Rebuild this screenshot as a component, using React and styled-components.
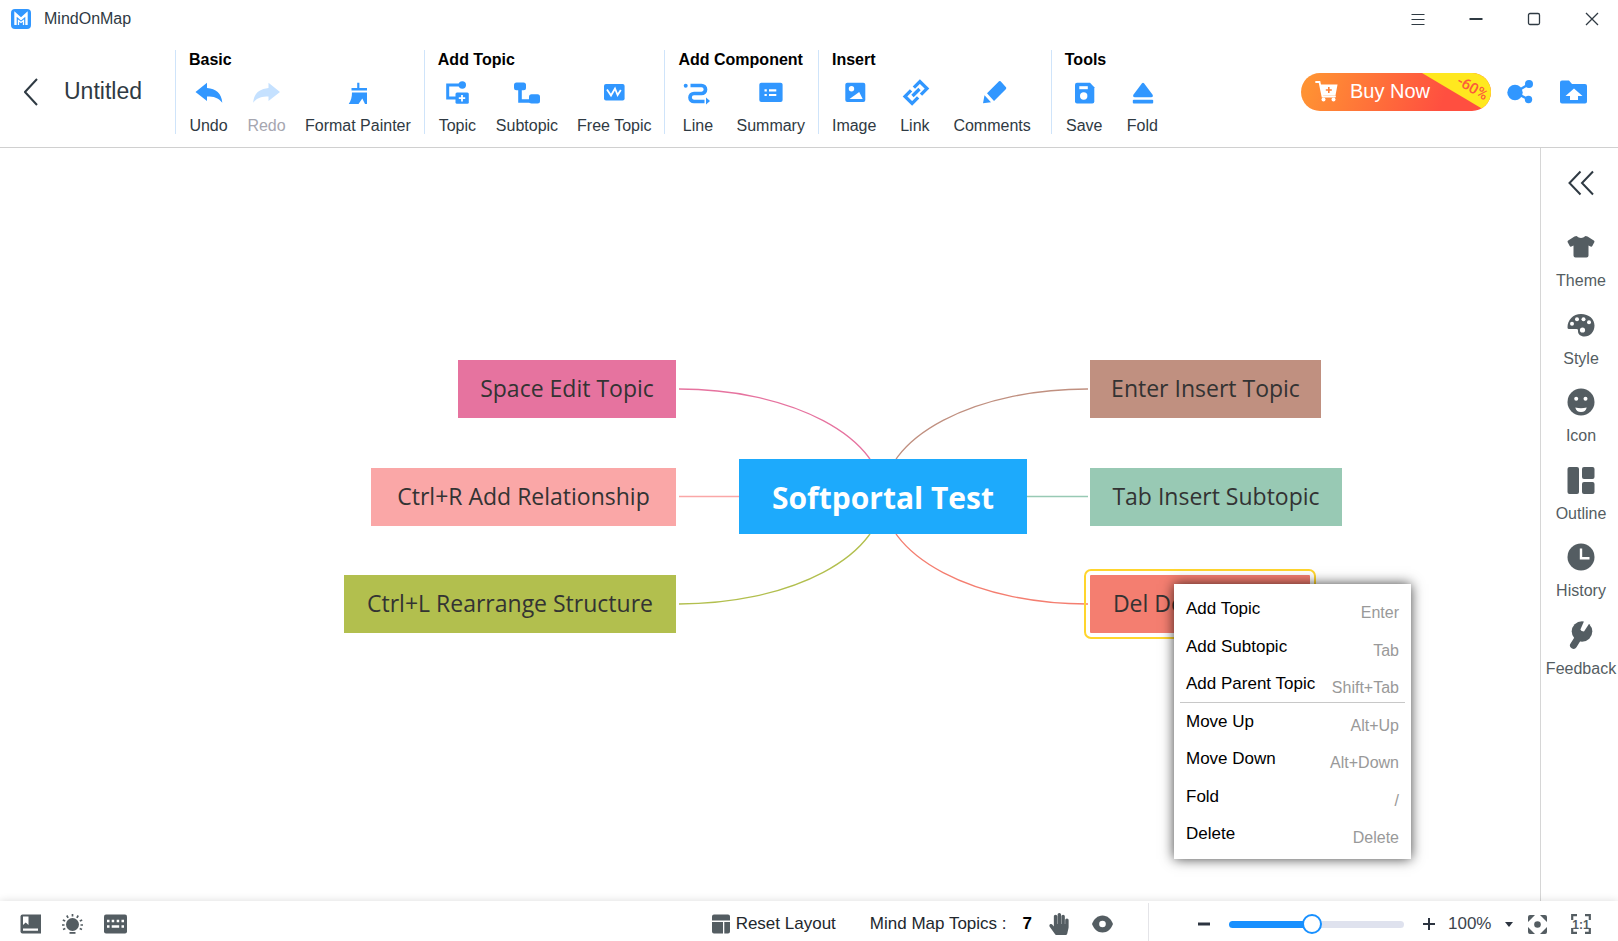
import React, { useState } from "react";
import styled, { createGlobalStyle } from "styled-components";
import { FaHandPaper } from "react-icons/fa";

const GlobalStyle = createGlobalStyle`
  * {
    box-sizing: border-box;
  }
  body {
    margin: 0;
    background: #fff;
    font-family: "Liberation Sans", Arial, sans-serif;
    font-size: 16px;
    line-height: 20px;
    color: #2f3a43;
  }
  button {
    font: inherit;
    color: inherit;
    background: none;
    border: none;
    padding: 0;
    cursor: pointer;
  }
  svg {
    display: block;
    flex: none;
  }
`;

const Container = styled.div`
  display: flex;
  flex-direction: column;
  height: 100vh;
  overflow: hidden;
`;

const TitleBar = styled.header`
  display: flex;
  align-items: center;
  height: 38px;
  padding: 0 11px;
`;
const AppName = styled.span`
  flex: 1;
  margin-left: 13px;
`;
const WindowButtons = styled.div`
  display: flex;
  gap: 28px;
`;
const WindowButton = styled.button`
  display: flex;
  align-items: center;
  justify-content: center;
  width: 30px;
  height: 30px;
`;

const Toolbar = styled.div`
  display: flex;
  align-items: flex-start;
  height: 110px;
  padding: 12px 31px 0 0;
  border-bottom: 1px solid #d0d0d0;
`;
const FileInfo = styled.div`
  display: flex;
  align-items: center;
  gap: 26px;
  width: 175px;
  height: 84px;
  padding-left: 24px;
`;
const FileName = styled.h1`
  margin: 0;
  padding-bottom: 2px;
  font-size: 23px;
  font-weight: 400;
  line-height: 26px;
`;
const Group = styled.section`
  height: 84px;
  padding: 0 ${(props) => (props.$wide ? 20 : 13)}px 0 13px;
  border-left: 1px solid #cfe4fa;
`;
const GroupTitle = styled.h2`
  margin: 0 0 3px;
  font-size: 16px;
  line-height: 20px;
  color: #000;
  white-space: nowrap;
`;
const Tools = styled.div`
  display: flex;
  gap: 19px;
`;
const Tool = styled.button`
  display: flex;
  flex-direction: column;
  align-items: center;
  gap: 4px;
  min-width: 39px;
  white-space: nowrap;

  svg {
    color: #3197ff;
  }
  &:disabled {
    color: #a6a6b0;
  }
  &:disabled svg {
    color: #c5e1ff;
  }
`;
const Actions = styled.div`
  display: flex;
  align-items: center;
  height: 84px;
  margin-left: auto;
  color: #3197ff;
`;
const BuyButton = styled.button`
  position: relative;
  display: flex;
  align-items: center;
  gap: 12px;
  width: 190px;
  height: 38px;
  margin-right: 16px;
  padding: 0 0 2px 13px;
  border-radius: 19px;
  background: linear-gradient(110deg, #ff9233 5%, #ff4f40 75%);
  color: #fff;
  font-size: 20px;
  line-height: 24px;
`;
const Ribbon = styled.span`
  position: absolute;
  top: 0;
  right: 0;
  width: 69px;
  height: 38px;
  border-radius: 0 19px 19px 0;
  background: #ffe81f;
  clip-path: polygon(0 0, 100% 0, 100% 100%, 64px 100%);
`;
const Discount = styled.span`
  position: absolute;
  top: 5px;
  right: 2px;
  color: #fb5a3c;
  font-family: Roboto, sans-serif;
  font-size: 15px;
  font-weight: 500;
  line-height: 20px;
  transform: rotate(30deg);
`;
const ActionButton = styled.button`
  & + & {
    margin-left: 27px;
  }
`;

const Main = styled.main`
  display: flex;
  flex: 1;
  min-height: 0;
`;
const Canvas = styled.div`
  position: relative;
  flex: 1;
  min-width: 0;
  overflow: hidden;
`;
const Branches = styled.svg`
  position: absolute;
  top: 0;
  left: 0;
  fill: none;
`;
const Node = styled.div`
  position: absolute;
  left: ${(props) => props.$x}px;
  top: ${(props) => props.$y}px;
  display: flex;
  align-items: center;
  justify-content: center;
  width: ${(props) => props.$w}px;
  height: 58px;
  padding-bottom: 2px;
  background: ${(props) => props.$color};
  color: #333;
  font-family: "Open Sans", "Noto Sans", sans-serif;
  font-size: 23px;
  line-height: 32px;
  white-space: nowrap;
`;
const RootNode = styled(Node)`
  height: 75px;
  padding: 3px 0 0;
  color: #fff;
  font-size: 30px;
  font-weight: 700;
  line-height: 40px;
`;
const SelectedNode = styled(Node)`
  outline: 2px solid #ffd52d;
  outline-offset: 4px;
  border-radius: 1px;
`;

const Menu = styled.ul`
  position: absolute;
  left: 1174px;
  top: 436px;
  display: grid;
  grid-auto-rows: 1fr;
  width: 237px;
  height: 275px;
  margin: 0;
  padding: 6px;
  list-style: none;
  background: #fff;
  box-shadow: 0 0 12px rgba(0, 0, 0, 0.75);
`;
const MenuItem = styled.li`
  border-bottom: 1px solid ${(props) => (props.$divided ? "#c8c8c8" : "transparent")};
`;
const MenuButton = styled.button`
  display: flex;
  justify-content: space-between;
  width: 100%;
  padding: 9px 6px 0;
  color: #000;
  font-size: 17px;
`;
const Shortcut = styled.kbd`
  padding-top: 4px;
  color: #999;
  font-family: inherit;
  font-size: 16px;
`;

const Sidebar = styled.aside`
  width: 78px;
  padding: 22px 0 0 3px;
  border-left: 1px solid #d6d6d6;
  color: #545d62;
`;
const Collapse = styled.button`
  display: block;
  margin: 0 auto;
  color: #2f3a43;
`;
const Panels = styled.nav`
  display: grid;
  grid-auto-rows: 1fr;
  height: 465px;
  margin-top: 37px;
`;
const Panel = styled.button`
  display: flex;
  flex-direction: column;
  align-items: center;
  gap: 10px;
`;

const StatusBar = styled.footer`
  position: relative;
  display: flex;
  align-items: center;
  height: 40px;
  padding-left: 20px;
  background: #fff;
  box-shadow: 0 0 8px rgba(0, 0, 0, 0.14);
  color: #545d62;
  font-size: 17px;
`;
const StatusLeft = styled.div`
  display: flex;
  gap: 21px;
  flex: 1;
  padding-top: 6px;
`;
const StatusCenter = styled.div`
  display: flex;
  align-items: center;
  height: 40px;
  padding: 6px 35px 0 0;
`;
const StatusButton = styled.button`
  display: flex;
  align-items: center;
  gap: 6px;
  margin-right: ${(props) => props.$gap || 0}px;

  span {
    color: #22272d;
  }
`;
const TopicCount = styled.p`
  margin: 0 16px 0 0;
  color: #22272d;
  white-space: pre;

  b {
    margin-left: 16px;
    color: #000;
  }
`;
const Zoom = styled.div`
  display: flex;
  align-items: center;
  height: 38px;
  margin-top: 2px;
  padding: 4px 27px 0 49px;
  border-left: 1px solid #e4e4e8;
  color: #2c3440;
`;
const Slider = styled.input`
  width: 175px;
  height: 20px;
  margin: 0 19px;
  appearance: none;
  background: none;

  &::-webkit-slider-runnable-track {
    height: 7px;
    border-radius: 4px;
    background: linear-gradient(to right, #1890ff 47%, #dfe2ee 47%);
  }
  &::-webkit-slider-thumb {
    appearance: none;
    width: 20px;
    height: 20px;
    margin-top: -7px;
    border: 2px solid #1890ff;
    border-radius: 50%;
    background: #fff;
  }
`;
const ZoomLevel = styled.div`
  display: grid;
  align-items: center;
  width: 65px;
  margin: 0 15px 0 13px;

  select,
  svg {
    grid-area: 1 / 1;
  }
  select {
    width: 65px;
    padding: 0;
    border: none;
    appearance: none;
    background: none;
    font: inherit;
    color: #3c444d;
  }
  svg {
    justify-self: end;
    pointer-events: none;
  }
`;
const FitButton = styled.button`
  color: #545d62;
  & + & {
    margin-left: 24px;
  }
`;

const Glyph = ({ w, h = w, children }) => (
  <svg width={w} height={h} viewBox={`0 0 ${w} ${h}`} fill="currentColor" aria-hidden="true">
    {children}
  </svg>
);

const line = { fill: "none", stroke: "currentColor" };

const arrow = "M6.5 19 18 9.7V15C27 16 32.5 20 33.3 29.7 29 24.5 25 23.5 18 23.5V28Z";

const groups = [
  {
    title: "Basic",
    tools: [
      { name: "Undo", icon: <path d={arrow} /> },
      {
        name: "Redo",
        disabled: true,
        icon: <path d={arrow} transform="matrix(-1 0 0 1 39.5 0)" />,
      },
      {
        name: "Format Painter",
        icon: (
          <path d="M19.2 9.7h2.2V15H29v2.500H13.500V15h5.700ZM14 19.500h15V31h-2l-2.700-5.500L20.500 31H10.700C13 28 14 24 14 19.500Z" />
        ),
      },
    ],
  },
  {
    title: "Add Topic",
    tools: [
      {
        name: "Topic",
        icon: (
          <>
            <path {...line} strokeWidth="3" d="M23 12H9.7v13H19" />
            <circle cx="24.3" cy="12" r="3.7" />
            <rect x="17.5" y="19.5" width="13.3" height="11.3" rx="1.5" />
            <path stroke="#fff" strokeWidth="1.8" d="M24 22v6.4M20.8 25.2h6.4" />
          </>
        ),
      },
      {
        name: "Subtopic",
        icon: (
          <>
            <rect x="7" y="9.6" width="12" height="7.6" rx="2.5" />
            <path {...line} strokeWidth="3.6" d="M13 15v13h11" />
            <rect x="22" y="21.3" width="11" height="9.2" rx="2.5" />
          </>
        ),
      },
      {
        name: "Free Topic",
        icon: (
          <>
            <rect x="9" y="11" width="20.6" height="16.6" rx="2" />
            <path fill="none" stroke="#fff" strokeWidth="1.8" d="m12 16.5 4 6 4-7 2.6 6.5 3.2-5" />
          </>
        ),
      },
    ],
  },
  {
    title: "Add Component",
    tools: [
      {
        name: "Line",
        icon: (
          <>
            <circle cx="7.7" cy="12.7" r="2" />
            <path {...line} strokeWidth="3.7" d="M12.5 12.5h11a4 4 0 0 1 0 8H16a4 4 0 0 0 0 8h10.5" />
            <path d="M28 24.5 32 28l-4 3.5Z" />
          </>
        ),
      },
      {
        name: "Summary",
        icon: (
          <>
            <rect x="8.3" y="9.7" width="23.3" height="19.3" rx="2" />
            <path stroke="#fff" strokeWidth="2.2" d="M13.5 17.3h2.3M18 17.3h7.3M13.5 22h2.3M18 22h7.3" />
          </>
        ),
      },
    ],
  },
  {
    title: "Insert",
    wide: true,
    tools: [
      {
        name: "Image",
        icon: (
          <>
            <rect x="10.3" y="9.7" width="20" height="19.3" rx="2" />
            <circle cx="16.5" cy="15.7" r="2.7" fill="#fff" />
            <path fill="#fff" d="m14.5 26 9.7-7 3.5 7Z" />
          </>
        ),
      },
      {
        name: "Link",
        icon: (
          <path
            {...line}
            strokeWidth="3.3"
            transform="rotate(-45 21 19.5)"
            d="M19 14.5h-8.5v10H19M23 14.5h8.5v10H23M16 19.5h10"
          />
        ),
      },
      {
        name: "Comments",
        icon: <path d="M14 20.3 26 8.3q.8-.6 1.6 0l5.400 6q.6.8 0 1.600L21 28ZM11.500 22.300l6.500 7-8 1Z" />,
      },
    ],
  },
  {
    title: "Tools",
    tools: [
      {
        name: "Save",
        icon: (
          <>
            <path d="M12 9.7h13l4.3 4.6v14.200q0 2-2 2H12q-2 0-2-2V11.700q0-2 2-2Z" />
            <rect x="14.3" y="13.2" width="8.5" height="3" fill="#fff" />
            <circle cx="18.7" cy="23" r="3.7" fill="#fff" />
          </>
        ),
      },
      {
        name: "Fold",
        icon: (
          <>
            <path d="M19 10.2q1-1 2 0l8.600 11.600q1 2.400-1.400 2.400H11.800q-2.400 0-1.400-2.400Z" />
            <rect x="9.8" y="26.8" width="20.4" height="3.6" rx="1" />
          </>
        ),
      },
    ],
  },
];

const nodes = [
  { text: "Space Edit Topic", x: 458, y: 212, w: 218, color: "#e6739f" },
  { text: "Ctrl+R Add Relationship", x: 371, y: 320, w: 305, color: "#faa7a7" },
  { text: "Ctrl+L Rearrange Structure", x: 344, y: 427, w: 332, color: "#b2bf4e" },
  { text: "Enter Insert Topic", x: 1090, y: 212, w: 231, color: "#c09080" },
  { text: "Tab Insert Subtopic", x: 1090, y: 320, w: 252, color: "#98c9b4" },
];

const menu = [
  ["Add Topic", "Enter"],
  ["Add Subtopic", "Tab"],
  ["Add Parent Topic", "Shift+Tab"],
  ["Move Up", "Alt+Up"],
  ["Move Down", "Alt+Down"],
  ["Fold", "/"],
  ["Delete", "Delete"],
];

const panels = [
  {
    name: "Theme",
    icon: (
      <path d="M9.5 3q4.500 4 9 0 1 0 2 .6l6.300 4q1 .7.5 1.700l-2 3.700q-.7 1-1.700.4l-2.100-1V22.500q0 2-2 2h-11q-2 0-2-2V12.400l-2.100 1q-1 .6-1.700-.4l-2-3.700q-.5-1 .5-1.700l6.300-4q1-.6 2-.6Z" />
    ),
  },
  {
    name: "Style",
    icon: (
      <>
        <path d="M14 3C22 3 27.5 8 27.5 14.5 27.5 21 23 25.5 17.5 25.5c-4 0-6.700-2.500-6.500-5.500.2-2-.8-2-2.500-2H2Q.5 18 .5 16.500C.5 9 6 3 14 3Z" />
        <g fill="#fff">
          <circle cx="5" cy="12.8" r="2" />
          <circle cx="10" cy="8.2" r="2" />
          <circle cx="16.5" cy="8.2" r="2" />
          <circle cx="22" cy="11.2" r="2" />
          <circle cx="15.5" cy="19" r="2.6" />
        </g>
      </>
    ),
  },
  {
    name: "Icon",
    icon: (
      <>
        <circle cx="14" cy="14" r="13.5" />
        <g fill="#fff">
          <circle cx="9.2" cy="10.8" r="2" />
          <circle cx="18.5" cy="10.8" r="2" />
          <path d="M8.3 19.5q5.700 1.600 11.400 0-1 4.500-5.700 4.500t-5.700-4.500Z" />
        </g>
      </>
    ),
  },
  {
    name: "Outline",
    icon: (
      <>
        <rect x=".5" y="1" width="11.5" height="27" rx="2" />
        <rect x="15" y="1" width="12.5" height="12" rx="2" />
        <rect x="15" y="16" width="12.5" height="12" rx="2" />
      </>
    ),
  },
  {
    name: "History",
    icon: (
      <>
        <circle cx="14" cy="14" r="13.5" />
        <path fill="none" stroke="#fff" strokeWidth="2.4" d="M14 5.5v9.800h8.500" />
      </>
    ),
  },
  {
    name: "Feedback",
    icon: (
      <>
        <circle cx="15" cy="10.5" r="10.3" />
        <path {...line} strokeWidth="7" strokeLinecap="round" d="m13 14-6.500 10.300" />
        <path fill="#fff" d="m17.6-1-4.200 9.500q.6 2 3.600 2L22.600 2Z" />
      </>
    ),
  },
];

const App = () => {
  const [zoom, setZoom] = useState(100);

  return (
    <Container>
      <GlobalStyle />
      <TitleBar>
        <Glyph w={20}>
          <rect width="20" height="20" rx="4" fill="#3197ff" />
          <path fill="none" stroke="#fff" strokeWidth="2.4" d="M4.5 16V5l5.500 5 5.500-5v11" />
          <path fill="none" stroke="#fff" strokeWidth="1.3" d="M7.5 16v-4.500L10 13.500l2.500-2V16" />
        </Glyph>
        <AppName>MindOnMap</AppName>
        <WindowButtons>
          <WindowButton aria-label="Menu">
            <Glyph w={14}>
              <path {...line} d="M.5 2.500h13M.5 7.500h13M.5 12.500h13" />
            </Glyph>
          </WindowButton>
          <WindowButton aria-label="Minimize">
            <Glyph w={14}>
              <path {...line} strokeWidth="2" d="M.5 7h13" />
            </Glyph>
          </WindowButton>
          <WindowButton aria-label="Maximize">
            <Glyph w={14}>
              <rect {...line} strokeWidth="1.3" x="1.5" y="1.5" width="11" height="11" rx="1.5" />
            </Glyph>
          </WindowButton>
          <WindowButton aria-label="Close">
            <Glyph w={14}>
              <path {...line} strokeWidth="1.3" d="m1 1 12 12M13 1 1 13" />
            </Glyph>
          </WindowButton>
        </WindowButtons>
      </TitleBar>

      <Toolbar>
        <FileInfo>
          <button aria-label="Back">
            <Glyph w={14} h={28}>
              <path {...line} strokeWidth="2" d="M13 1 1 14l12 13" />
            </Glyph>
          </button>
          <FileName>Untitled</FileName>
        </FileInfo>
        {groups.map((group) => (
          <Group key={group.title} $wide={group.wide}>
            <GroupTitle>{group.title}</GroupTitle>
            <Tools>
              {group.tools.map((tool) => (
                <Tool key={tool.name} disabled={tool.disabled}>
                  <Glyph w={39}>{tool.icon}</Glyph>
                  {tool.name}
                </Tool>
              ))}
            </Tools>
          </Group>
        ))}
        <Actions>
          <BuyButton>
            <Glyph w={24}>
              <path {...line} strokeWidth="1.8" strokeLinecap="round" d="M2 3h3.500l3 14.500H21" />
              <path d="M6 5.500h17.500l-2 11H8.500Z" />
              <circle cx="9.5" cy="20.5" r="2" />
              <circle cx="19.5" cy="20.5" r="2" />
              <path stroke="#ff8036" strokeWidth="1.6" d="M14.800 8v6M11.800 11h6" />
            </Glyph>
            Buy Now
            <Ribbon />
            <Discount>-60%</Discount>
          </BuyButton>
          <ActionButton aria-label="Share">
            <Glyph w={26} h={24}>
              <circle cx="8" cy="12.5" r="7.7" />
              <circle cx="22" cy="4" r="4" />
              <circle cx="21.5" cy="19.5" r="3.7" />
              <path {...line} strokeWidth="2.4" d="M22 4 8 12.500l13.500 7" />
            </Glyph>
          </ActionButton>
          <ActionButton aria-label="Export">
            <Glyph w={27} h={24}>
              <path d="M2 .5h7l3 3.500h13q2 0 2 2v15.500q0 2-2 2H2q-2 0-2-2v-19q0-2 2-2Z" />
              <path fill="#fff" d="m14 8.500 8.500 7.500H18v4h-8v-4H5.500Z" />
            </Glyph>
          </ActionButton>
        </Actions>
      </Toolbar>

      <Main>
        <Canvas>
          <Branches width="1540" height="753" strokeWidth="1.3">
            <path stroke="#e6739f" d="M679 241A204 108 0 0 1 883 349" />
            <path stroke="#c09080" d="M1088 241A204 108 0 0 0 883 349" />
            <path stroke="#faa7a7" d="M679 348.500H883" />
            <path stroke="#98c9b4" d="M883 348.500H1088" />
            <path stroke="#b2bf4e" d="M679 456A204 108 0 0 0 883 348" />
            <path stroke="#f47e70" d="M1088 456A204 108 0 0 1 883 348" />
          </Branches>
          {nodes.map((node) => (
            <Node key={node.text} $x={node.x} $y={node.y} $w={node.w} $color={node.color}>
              {node.text}
            </Node>
          ))}
          <SelectedNode $x={1090} $y={427} $w={220} $color="#f47e70">
            Del Delete Topic
          </SelectedNode>
          <RootNode $x={739} $y={311} $w={288} $color="#1daafc">
            Softportal Test
          </RootNode>
          <Menu>
            {menu.map(([label, keys]) => (
              <MenuItem key={label} $divided={label === "Add Parent Topic"}>
                <MenuButton>
                  {label}
                  <Shortcut>{keys}</Shortcut>
                </MenuButton>
              </MenuItem>
            ))}
          </Menu>
        </Canvas>

        <Sidebar>
          <Collapse aria-label="Collapse">
            <Glyph w={26}>
              <path {...line} strokeWidth="2" d="M12.500 1.500 1.500 13l11 11.500M25 1.500 14 13l11 11.500" />
            </Glyph>
          </Collapse>
          <Panels>
            {panels.map((panel) => (
              <Panel key={panel.name}>
                <Glyph w={28}>{panel.icon}</Glyph>
                {panel.name}
              </Panel>
            ))}
          </Panels>
        </Sidebar>
      </Main>

      <StatusBar>
        <StatusLeft>
          <StatusButton aria-label="Manual">
            <Glyph w={21} h={20}>
              <path d="M2.500.5H21v19H2.500q-2 0-2-2v-15q0-2 2-2Z" />
              <path fill="#fff" d="M3 2.500h5.500V11L5.700 8.500 3 11ZM3 14.500h15v2.300H3Z" />
            </Glyph>
          </StatusButton>
          <StatusButton aria-label="Tips">
            <Glyph w={21} h={20}>
              <circle cx="10.5" cy="10.5" r="6.5" />
              <path
                {...line}
                strokeWidth="1.7"
                d="M10.500 0v2.500M4.800 1.500l1.300 2.300M16.200 1.500l-1.300 2.300M.8 6l2.400 1M20.200 6l-2.400 1M0 11h2.500M18.500 11H21M1 15.500l2.300-1M20 15.500l-2.300-1"
              />
              <path d="M7.500 18h6v1.800h-6Z" />
            </Glyph>
          </StatusButton>
          <StatusButton aria-label="Keyboard shortcuts">
            <Glyph w={23} h={20}>
              <rect y=".5" width="23" height="19" rx="2" />
              <path
                stroke="#fff"
                strokeWidth="2.6"
                d="M3 7h2.500M7.700 7h2.500M12.700 7h2.500M17.500 7H20M3 12.500h2.500M7.700 12.500h7.500M17.500 12.500H20"
              />
            </Glyph>
          </StatusButton>
        </StatusLeft>
        <StatusCenter>
          <StatusButton $gap={34}>
            <Glyph w={18} h={20}>
              <path d="M2 .5h14q2 0 2 2v4H0v-4q0-2 2-2ZM0 8h11v11.500H2q-2 0-2-2ZM12.300 8H18v9.500q0 2-2 2h-3.700Z" />
            </Glyph>
            <span>Reset Layout</span>
          </StatusButton>
          <TopicCount>
            Mind Map Topics :<b>7</b>
          </TopicCount>
          <StatusButton aria-label="Pan" $gap={22}>
            <FaHandPaper size={22} />
          </StatusButton>
          <StatusButton aria-label="Preview">
            <Glyph w={21} h={18}>
              <path d="M10.500.5C15.500.5 19 4 21 9c-2 5-5.500 8.500-10.500 8.500S2 14 0 9C2 4 5.500.5 10.500.5Z" />
              <circle cx="10.5" cy="9" r="3.3" fill="#fff" />
            </Glyph>
          </StatusButton>
        </StatusCenter>
        <Zoom>
          <button aria-label="Zoom out" onClick={() => setZoom(zoom - 10)}>
            <Glyph w={12}>
              <path {...line} strokeWidth="3" d="M0 6h12" />
            </Glyph>
          </button>
          <Slider
            type="range"
            aria-label="Zoom"
            min="10"
            max="200"
            value={zoom}
            onChange={(e) => setZoom(Number(e.target.value))}
          />
          <button aria-label="Zoom in" onClick={() => setZoom(zoom + 10)}>
            <Glyph w={12}>
              <path {...line} strokeWidth="2" d="M0 6h12M6 0v12" />
            </Glyph>
          </button>
          <ZoomLevel>
            <select aria-label="Zoom level" value={zoom} onChange={(e) => setZoom(Number(e.target.value))}>
              <option value={zoom}>{zoom}%</option>
            </select>
            <Glyph w={8} h={5}>
              <path d="M0 0h8L4 5Z" />
            </Glyph>
          </ZoomLevel>
          <FitButton aria-label="Fit to window">
            <Glyph w={19}>
              <path d="M2 0h5L0 7V2q0-2 2-2ZM12 0h5q2 0 2 2v5ZM0 12l7 7H2q-2 0-2-2ZM19 12v5q0 2-2 2h-5Z" />
              <circle cx="9.5" cy="9.5" r="3.3" />
            </Glyph>
          </FitButton>
          <FitButton aria-label="Actual size">
            <Glyph w={20}>
              <path
                {...line}
                strokeWidth="2.2"
                d="M6 1.200H1.200V6M14 1.200h4.800V6M6 18.800H1.200V14M14 18.800h4.800V14"
              />
              <text x="10" y="14.500" textAnchor="middle" fontSize="12" fontWeight="700">
                1:1
              </text>
            </Glyph>
          </FitButton>
        </Zoom>
      </StatusBar>
    </Container>
  );
};
export default App;
